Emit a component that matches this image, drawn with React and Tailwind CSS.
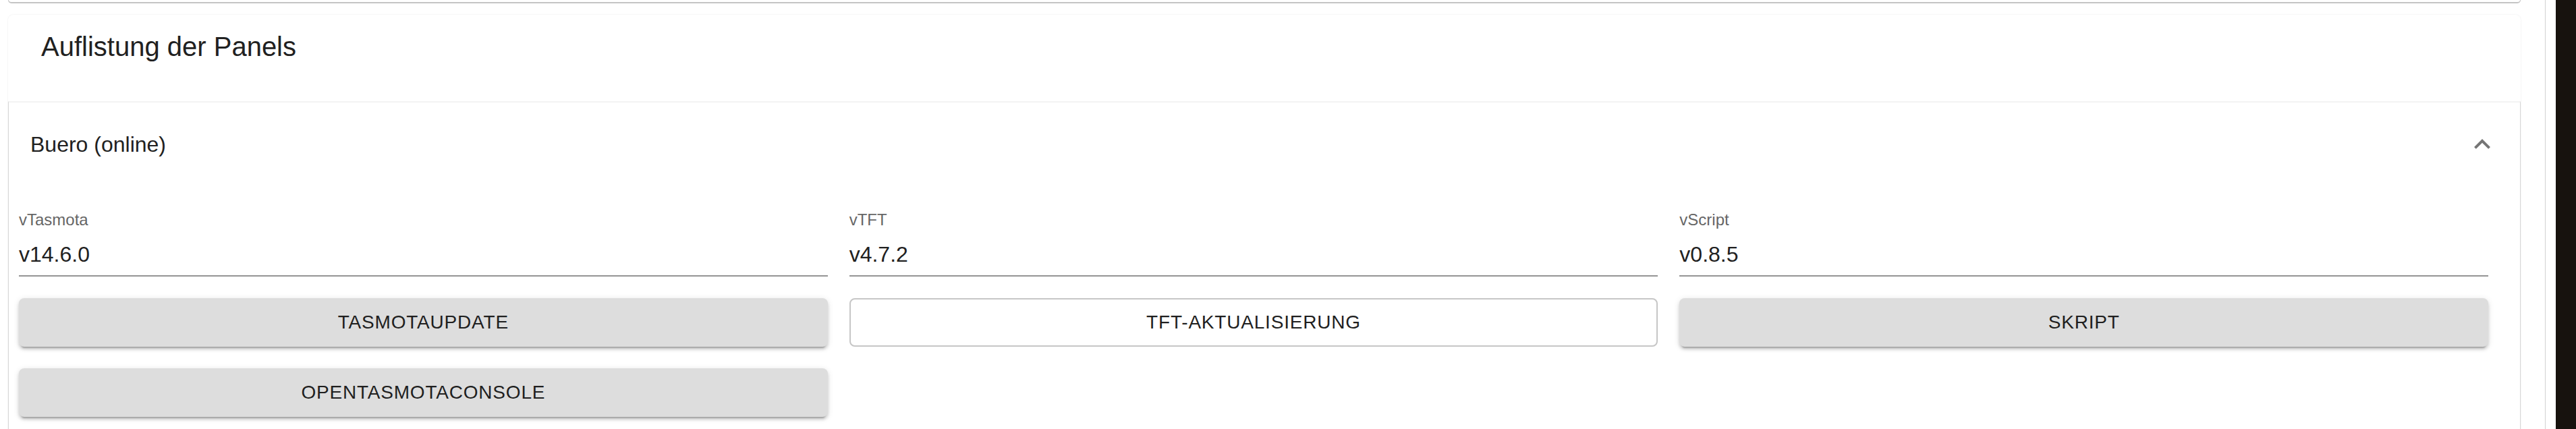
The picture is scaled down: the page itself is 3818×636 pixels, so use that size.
import React from "react";

function Field({ label, value }) {
  return (
    <div className="h-[96px] flex flex-col">
      <div className="h-[32px] text-[24px] leading-[24px] text-[#666666]">{label}</div>
      <div className="h-[64px] border-b-2 border-[#949494] pt-[8px]">
        <div className="text-[32px] leading-[46px] text-[#212121]">{value}</div>
      </div>
    </div>
  );
}

function ContainedButton({ children }) {
  return (
    <div className="h-[72px] rounded-[8px] bg-[#dddddd] flex items-center justify-center text-[28px] tracking-[0.8px] text-[#1f1f1f] shadow-[0_6px_2px_-4px_rgba(0,0,0,0.2),0_4px_4px_0_rgba(0,0,0,0.14),0_2px_10px_0_rgba(0,0,0,0.12)]">
      {children}
    </div>
  );
}

function OutlinedButton({ children }) {
  return (
    <div className="h-[72px] rounded-[8px] border-2 border-[#c6c6c6] bg-white flex items-center justify-center text-[28px] tracking-[0.8px] text-[#1f1f1f]">
      {children}
    </div>
  );
}

export default function App() {
  return (
    <div className="flex w-[3818px] h-[636px] overflow-hidden bg-white font-['Liberation_Sans',Arial,sans-serif]">
      <div className="w-[3772px] shrink-0 pl-[12px] pr-[36px]">
        <div className="h-[5px] rounded-b-[8px] border-x border-b-2 border-[#c4c4c4]" />
        <div className="mt-[17px] rounded-t-[8px] shadow-[0_0_3px_0_rgba(0,0,0,0.08)]">
          <div className="h-[128px] pl-[49px] pt-[15px] text-[40px] leading-[64px] text-[#212121]">
            Auflistung der Panels
          </div>
          <div className="border-t-2 border-[#f3f3f3] border-x border-x-[#d6d6d6] h-[600px]">
            <div className="h-[126px] flex items-center justify-between pl-[32px] pr-[32px] pb-[3px]">
              <span className="text-[32px] text-[#212121]">Buero (online)</span>
              <svg width="48" height="48" viewBox="0 0 24 24" className="block">
                <path d="M12 8l-6 6 1.41 1.41L12 10.83l4.59 4.58L18 14z" fill="#757575" />
              </svg>
            </div>
            <div className="pl-[15px] pr-[47px] pt-[36px] grid grid-cols-3 gap-x-[32px] gap-y-[32px]">
              <Field label="vTasmota" value="v14.6.0" />
              <Field label="vTFT" value="v4.7.2" />
              <Field label="vScript" value="v0.8.5" />
              <ContainedButton>TASMOTAUPDATE</ContainedButton>
              <OutlinedButton>TFT-AKTUALISIERUNG</OutlinedButton>
              <ContainedButton>SKRIPT</ContainedButton>
              <ContainedButton>OPENTASMOTACONSOLE</ContainedButton>
            </div>
          </div>
        </div>
      </div>
      <div className="w-px shrink-0 bg-[#d4d4d4] shadow-[2px_0_4px_rgba(0,0,0,0.12)]" />
      <div className="w-[15px] shrink-0 bg-white" />
      <div className="flex-1 bg-[#17120e]" />
    </div>
  );
}
